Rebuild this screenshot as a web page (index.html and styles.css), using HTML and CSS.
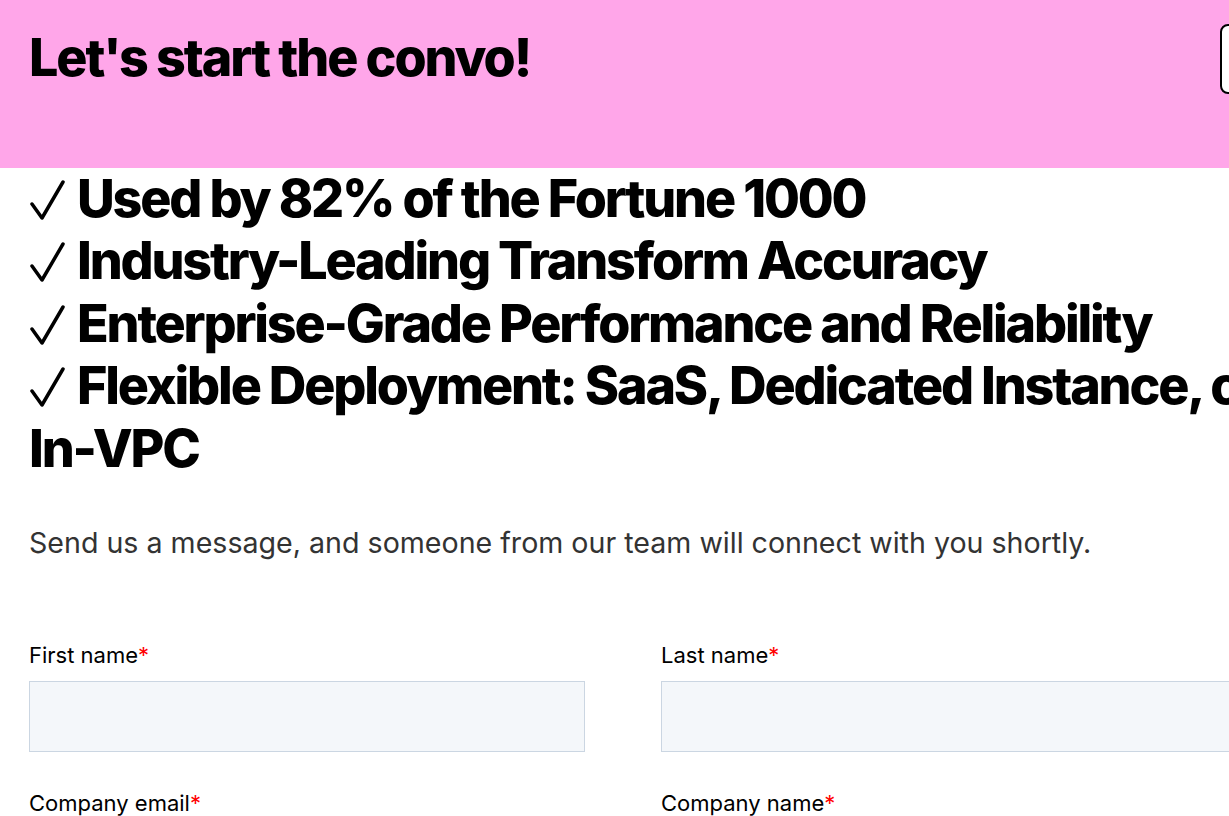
FILE: index.html
```html
<!DOCTYPE html>
<html lang="en">
<head>
    <meta charset="UTF-8">
    <meta name="viewport" content="width=device-width, initial-scale=1.0">
    <title>Contact Us</title>
    <link rel="stylesheet" href="styles.css">
</head>
<body>
    <div class="page">
        <header class="banner">
            <h1>Let's start the convo!</h1>
            <button class="close-btn" type="button">Close</button>
        </header>

        <ul class="perks">
            <li><svg class="check" viewBox="0 0 36 40"><path d="M3 24 L13 38 L34 2"/></svg>Used by 82% of the Fortune 1000</li>
            <li><svg class="check" viewBox="0 0 36 40"><path d="M3 24 L13 38 L34 2"/></svg>Industry-Leading Transform Accuracy</li>
            <li><svg class="check" viewBox="0 0 36 40"><path d="M3 24 L13 38 L34 2"/></svg>Enterprise-Grade Performance and Reliability</li>
            <li><svg class="check" viewBox="0 0 36 40"><path d="M3 24 L13 38 L34 2"/></svg>Flexible Deployment: SaaS, Dedicated Instance, or <span class="nowrap">In-VPC</span></li>
        </ul>

        <p class="intro">Send us a message, and someone from our team will connect with you shortly.</p>

        <form class="contact-form">
            <div class="form-row">
                <div class="field">
                    <label for="firstname">First name<span class="req">*</span></label>
                    <input type="text" id="firstname" name="firstname">
                </div>
                <div class="field">
                    <label for="lastname">Last name<span class="req">*</span></label>
                    <input type="text" id="lastname" name="lastname">
                </div>
            </div>
            <div class="form-row">
                <div class="field">
                    <label for="email">Company email<span class="req">*</span></label>
                    <input type="email" id="email" name="email">
                </div>
                <div class="field">
                    <label for="company">Company name<span class="req">*</span></label>
                    <input type="text" id="company" name="company">
                </div>
            </div>
        </form>
    </div>
</body>
</html>
```

FILE: styles.css
```css
body {
    margin: 0;
    background-color: #ffffff;
    color: #000000;
    font-family: Inter, "Liberation Sans", sans-serif;
}

.page {
    width: 1440px;
}

.banner {
    background-color: #ffa6e9;
    height: 168px;
    box-sizing: border-box;
    padding: 27px 29px 0 29px;
    display: flex;
    justify-content: space-between;
    align-items: flex-start;
}

.banner h1 {
    margin: 0;
    font-size: 52px;
    line-height: 1.2;
    font-weight: 800;
    letter-spacing: -0.04em;
}

.close-btn {
    margin-top: -3px;
    width: 191px;
    height: 70px;
    background-color: #ffffff;
    border: 2px solid #000000;
    border-radius: 8px;
    font-family: inherit;
    font-size: 20px;
    font-weight: 700;
    color: #000000;
}

.perks {
    list-style: none;
    margin: 0;
    padding: 0 29px;
}

.perks li {
    font-size: 52px;
    line-height: 1.2;
    font-weight: 800;
    letter-spacing: -0.042em;
}

.check {
    width: 36px;
    height: 40px;
    margin-right: 12px;
    vertical-align: -3px;
    fill: none;
    stroke: #000000;
    stroke-width: 3.5;
    stroke-linecap: round;
    stroke-linejoin: round;
}

.nowrap {
    white-space: nowrap;
}

.intro {
    margin: 42px 29px 79px 29px;
    font-size: 28.6px;
    line-height: 42px;
    color: #333333;
}

.contact-form {
    padding: 0 29px;
}

.form-row {
    display: grid;
    grid-template-columns: 556px 1fr;
    column-gap: 76px;
}

.field {
    margin-bottom: 39px;
}

.field label {
    display: block;
    font-size: 22px;
    line-height: 24px;
    margin-bottom: 14px;
}

.req {
    color: #ff0000;
}

.field input {
    display: block;
    width: 100%;
    height: 71px;
    box-sizing: border-box;
    background-color: #f4f7fa;
    border: 1px solid #cbd6e2;
    border-radius: 0;
    font-family: inherit;
    font-size: 18px;
}
```
